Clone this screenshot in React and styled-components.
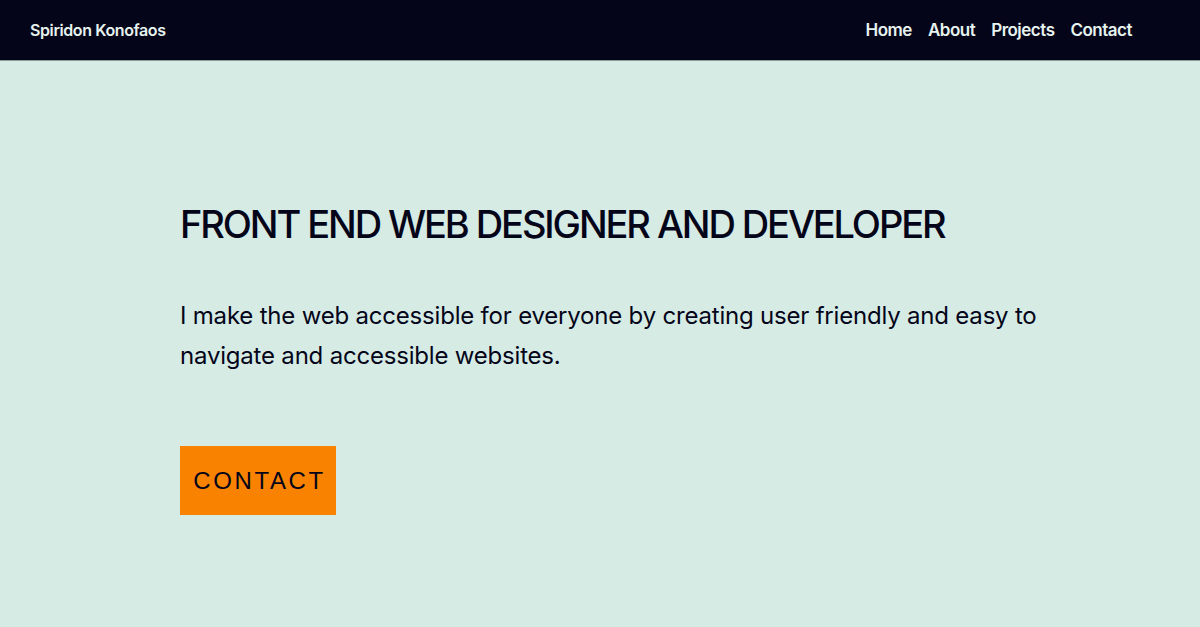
import styled, { createGlobalStyle } from "styled-components";

const GlobalStyle = createGlobalStyle`
  html, body {
    margin: 0;
    padding: 0;
    background: #d6ebe4;
  }
  * {
    box-sizing: border-box;
  }
`;

const links = ["Home", "About", "Projects", "Contact"];

const App = () => {
  return (
    <Page>
      <GlobalStyle />
      <Nav>
        <Brand>Spiridon Konofaos</Brand>
        <Links>
          {links.map(l => (
            <NavLink key={l} href="#">
              {l}
            </NavLink>
          ))}
        </Links>
      </Nav>
      <Hero>
        <Title>FRONT END WEB DESIGNER AND DEVELOPER</Title>
        <Text>
          I make the web accessible for everyone by creating user friendly and easy to
          navigate and accessible websites.
        </Text>
        <Button>CONTACT</Button>
      </Hero>
    </Page>
  );
};

export default App;

const Page = styled.div`
  min-height: 627px;
  background: #d6ebe4;
  font-family: Inter, "Noto Sans", sans-serif;
`;

const Nav = styled.nav`
  height: 61px;
  background: #05051a;
  display: flex;
  align-items: center;
  justify-content: space-between;
  padding: 0 68px 0 30px;
  border-bottom: 1px solid #8a9a96;
`;

const Brand = styled.a`
  color: #e6f3ee;
  font-size: 16px;
  font-weight: 600;
  letter-spacing: -0.4px;
`;

const Links = styled.div`
  display: flex;
  gap: 16px;
`;

const NavLink = styled.a`
  color: #e6f3ee;
  text-decoration: none;
  font-size: 17px;
  font-weight: 600;
  letter-spacing: -0.5px;
`;

const Hero = styled.main`
  padding: 139px 0 0 180px;
`;

const Title = styled.h1`
  margin: 0;
  color: #05051a;
  font-size: 38px;
  font-weight: 500;
  line-height: 48px;
  letter-spacing: -2.1px;
`;

const Text = styled.p`
  margin: 48px 0 0;
  max-width: 880px;
  color: #05051a;
  font-size: 24px;
  font-weight: 400;
  line-height: 40px;
  letter-spacing: -0.2px;
`;

const Button = styled.button`
  margin-top: 70px;
  width: 156px;
  height: 69px;
  border: none;
  border-radius: 0;
  background: #f98300;
  color: #05051a;
  font-family: "Liberation Sans", Arial, sans-serif;
  font-size: 24px;
  letter-spacing: 2.6px;
  padding: 0 0 0 3px;
  cursor: pointer;
`;
